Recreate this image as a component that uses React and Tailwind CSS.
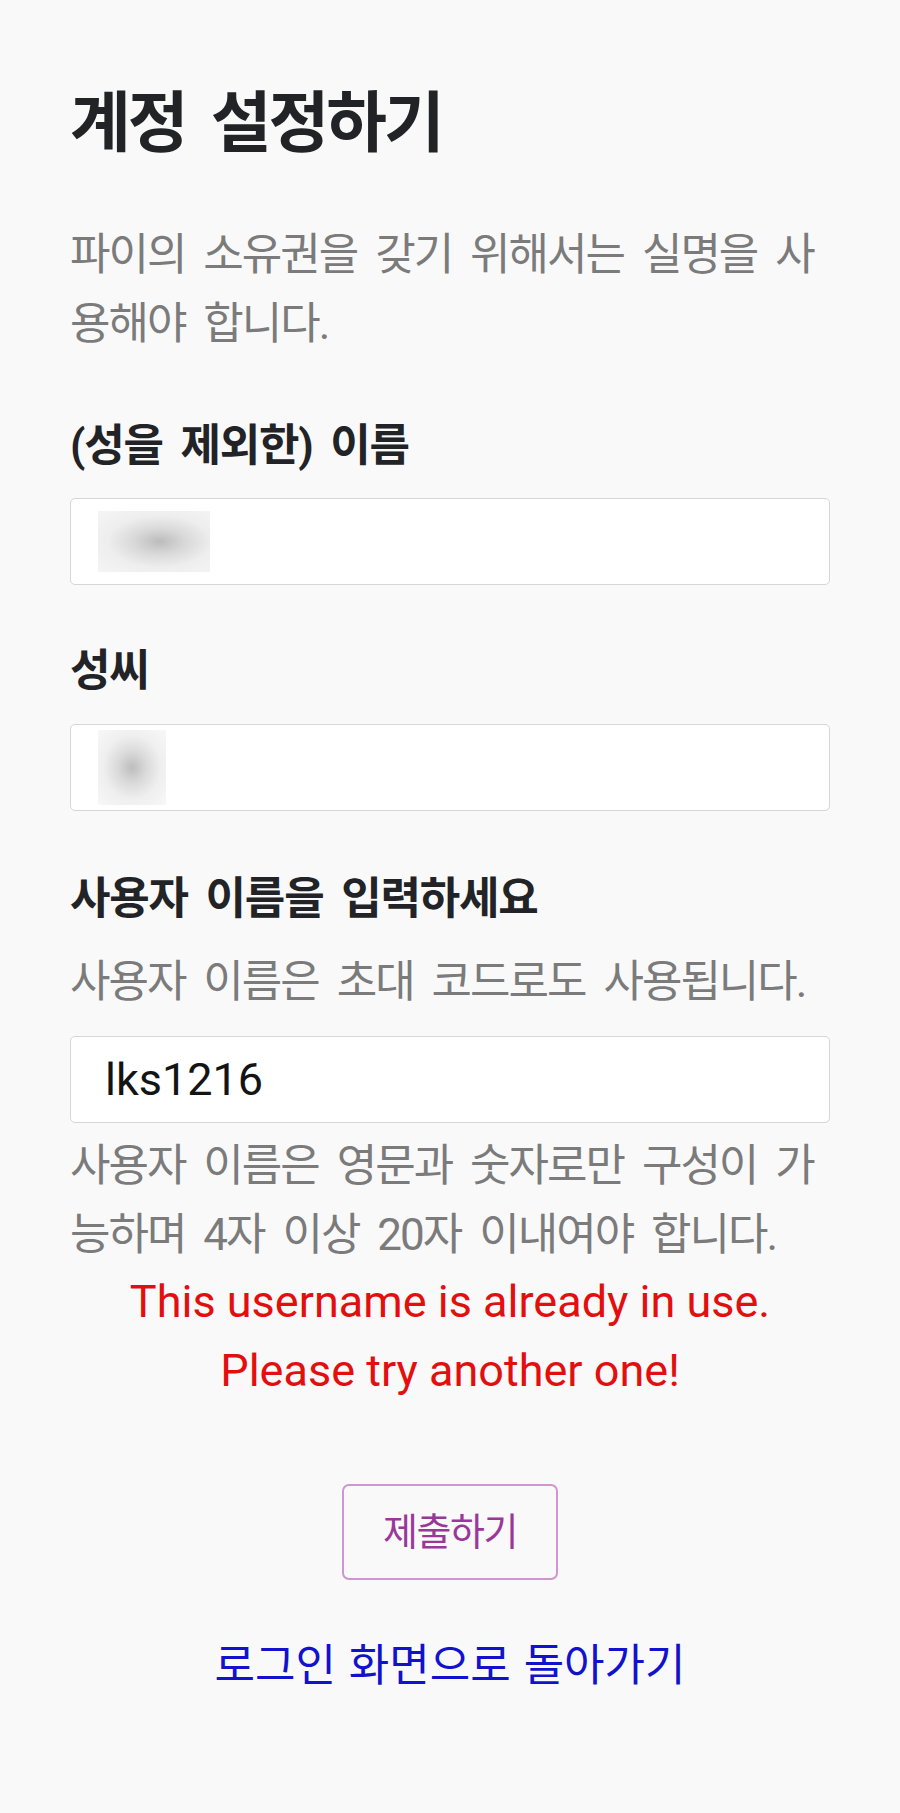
export default function App() {
  const body = "text-[44px] leading-[69px] tracking-[-2px] [word-spacing:9px] break-all";
  const label = "text-[44px] leading-[69px] tracking-[-1.2px] [word-spacing:8px] font-bold text-[#222326]";
  return (
    <div className="min-h-[1813px] w-full bg-[#f9f9f9] font-[Roboto,'Noto_Sans_CJK_KR',sans-serif]">
      <div className="px-[70px] pt-[84px] pb-[60px] flex flex-col">
        <h1 className="text-[66px] leading-[80px] font-bold tracking-[-3px] [word-spacing:12px] text-[#222326]">
          계정 설정하기
        </h1>
        <p className={`mt-[57px] text-[#7b7b7b] ${body}`}>
          파이의 소유권을 갖기 위해서는 실명을 사용해야 합니다.
        </p>

        <label className={`mt-[53px] ${label}`}>(성을 제외한) 이름</label>
        <div className="mt-[17px] h-[87px] rounded-[5px] border border-[#d6d6d6] bg-white flex items-center pl-[27px]">
          <div className="w-[112px] h-[61px] bg-[radial-gradient(ellipse_at_55%_50%,#bcbcbc_0%,#d9d9d9_30%,#eeeeee_60%,#f5f5f5_100%)]" />
        </div>

        <label className={`mt-[52px] ${label}`}>성씨</label>
        <div className="mt-[18px] h-[87px] rounded-[5px] border border-[#d6d6d6] bg-white flex items-center pl-[27px]">
          <div className="w-[68px] h-[75px] bg-[radial-gradient(ellipse_at_50%_50%,#bdbdbd_0%,#dadada_30%,#efefef_60%,#f8f8f8_100%)]" />
        </div>

        <label className={`mt-[54px] ${label}`}>사용자 이름을 입력하세요</label>
        <p className={`mt-[14px] text-[#7b7b7b] ${body}`}>사용자 이름은 초대 코드로도 사용됩니다.</p>
        <div className="mt-[19px] h-[87px] rounded-[5px] border border-[#d6d6d6] bg-white flex items-center pl-[34px]">
          <span className="text-[45px] text-[#141414] font-['Roboto',sans-serif]">lks1216</span>
        </div>
        <p className={`mt-[9px] text-[#7b7b7b] ${body}`}>
          사용자 이름은 영문과 숫자로만 구성이 가능하며 4자 이상 20자 이내여야 합니다.
        </p>

        <div className="mt-[-3px] text-center text-[45px] leading-[69px] text-[#e30f0f] font-['Roboto',sans-serif]">
          <div>This username is already in use.</div>
          <div>Please try another one!</div>
        </div>

        <div className="mt-[79px] flex justify-center">
          <button className="w-[216px] h-[96px] rounded-[7px] border-2 border-[#cf96cf] bg-transparent text-[38px] tracking-[-1.5px] text-[#9a389a] flex items-center justify-center">
            제출하기
          </button>
        </div>

        <div className="mt-[52px] flex justify-center">
          <a className="text-[44px] leading-[69px] [word-spacing:2px] text-[#1212cc]" href="#">
            로그인 화면으로 돌아가기
          </a>
        </div>
      </div>
    </div>
  );
}
